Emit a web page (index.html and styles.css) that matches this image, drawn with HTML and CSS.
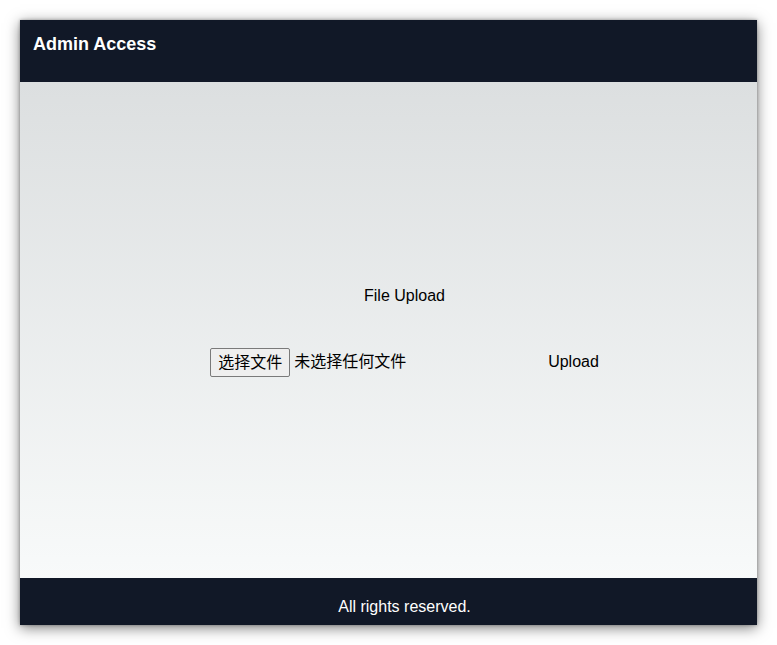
FILE: index.html
```html
<!DOCTYPE html>
<html lang="zh-CN">
<head>
<meta charset="utf-8">
<title>Admin Access</title>
<link rel="stylesheet" href="styles.css">
</head>
<body>
<div class="window">
  <header class="topbar">
    <h1 class="brand">Admin Access</h1>
  </header>
  <main class="content">
    <form class="upload" onsubmit="return false;">
      <h2 class="upload-title">File Upload</h2>
      <div class="upload-row">
        <label class="file-picker">
          <input class="file-native" type="file">
          <span class="file-btn">选择文件</span>
          <span class="file-name">未选择任何文件</span>
        </label>
        <button class="upload-btn" type="submit">Upload</button>
      </div>
    </form>
  </main>
  <footer class="footer">All rights reserved.</footer>
</div>
</body>
</html>
```
FILE: styles.css
```css
* { box-sizing: border-box; }
html, body { height: 100%; }
body {
  margin: 0;
  padding: 20px;
  background: #ffffff;
  font-family: "Liberation Sans", "Noto Sans CJK SC", Arial, sans-serif;
  color: #000;
}
.window {
  height: 605px;
  display: flex;
  flex-direction: column;
  box-shadow: 0 3px 13px rgba(0, 0, 0, 0.5), 0 0 3px rgba(0, 0, 0, 0.3);
}
.topbar {
  height: 62px;
  background: #111827;
  padding: 13px 13px;
  flex: none;
}
.brand {
  margin: 0;
  color: #fff;
  font-size: 18px;
  line-height: 22px;
  font-weight: 700;
}
.content {
  flex: 1;
  background: linear-gradient(#dcdfe0, #f8fafa);
  display: flex;
  align-items: center;
  justify-content: center;
  padding-left: 32px;
}
.upload {
  display: flex;
  flex-direction: column;
  align-items: center;
  padding-top: 2px;
}
.upload-title {
  margin: 0 0 42px;
  font-size: 16px;
  font-weight: 400;
  line-height: 20px;
}
.upload-row {
  display: flex;
  align-items: center;
}
.file-picker {
  display: flex;
  align-items: center;
  cursor: pointer;
}
.file-native { display: none; }
.file-btn {
  height: 29px;
  padding: 0 7px;
  border: 1px solid #7a7a7a;
  border-radius: 2px;
  background: #efefef;
  font-size: 16px;
  line-height: 27px;
}
.file-name {
  margin-left: 4px;
  font-size: 16px;
  line-height: 20px;
}
.upload-btn {
  margin-left: 142px;
  padding: 0;
  border: 0;
  background: transparent;
  font-family: inherit;
  font-size: 16px;
  line-height: 20px;
  color: #000;
  cursor: pointer;
}
.footer {
  height: 47px;
  flex: none;
  background: #111827;
  color: #fff;
  text-align: center;
  font-size: 16px;
  line-height: 20px;
  padding: 19px 0 0 32px;
}
```
